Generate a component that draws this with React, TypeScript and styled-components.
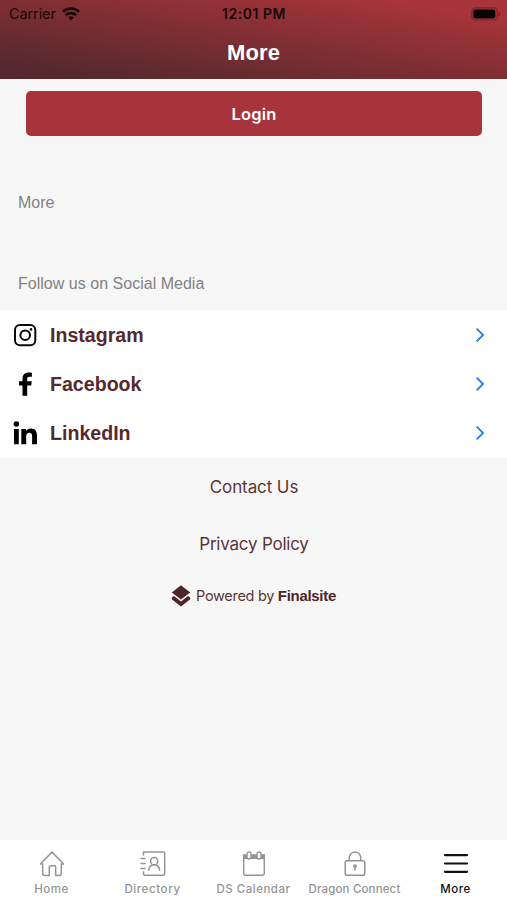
import React from "react";
import styled, { createGlobalStyle } from "styled-components";

const GlobalStyle = createGlobalStyle`
  * { box-sizing: border-box; }
  body { margin: 0; background: #f7f7f7; font-family: Inter, "Liberation Sans", sans-serif; }
  svg { display: block; }
`;

const Screen = styled.div`
  width: 507px;
  height: 900px;
  display: flex;
  flex-direction: column;
  background: #f7f7f7;
  overflow: hidden;
`;

const Header = styled.header`
  height: 79px;
  flex: none;
  background: linear-gradient(to bottom left, #a7343a 12%, #55292d 90%);
`;

const StatusBar = styled.div`
  height: 28px;
  padding: 0 6px 0 9px;
  display: grid;
  grid-template-columns: 1fr auto 1fr;
  align-items: center;
  color: #1a0709;
  font-size: 14.5px;
  line-height: 28px;
`;

const Carrier = styled.div`
  display: flex;
  align-items: center;
  gap: 6px;
  letter-spacing: -0.1px;
  svg { margin-top: -1px; }
`;

const Clock = styled.div`
  margin-right: 2px;
  font-weight: 600;
  font-size: 14px;
  letter-spacing: 0.55px;
`;

const BatterySlot = styled.div`
  justify-self: end;
  margin-top: -1px;
`;

const Title = styled.h1`
  margin: 0;
  color: #fff;
  font: 700 22px/49px "Liberation Sans", sans-serif;
  letter-spacing: 0.1px;
  text-align: center;
`;

const LoginButton = styled.button`
  display: block;
  flex: none;
  width: 456px;
  height: 45px;
  margin: 12px 0 1px 26px;
  padding: 0;
  border: 0;
  border-radius: 5px;
  background: #a7343a;
  color: #fff;
  font: 600 16.5px/46px Inter, sans-serif;
  letter-spacing: 0.2px;
`;

const SectionHeading = styled.h2<{ $top: number }>`
  flex: none;
  margin: ${(p) => p.$top}px 0 0 18px;
  color: #828282;
  font: 400 16px/20px "Liberation Sans", sans-serif;
  letter-spacing: 0.02px;
`;

const SocialList = styled.div`
  flex: none;
  margin-top: 16px;
  height: 148px;
  background: #fff;
`;

const SocialRow = styled.div`
  height: 49px;
  padding: 0 20px 0 12px;
  display: grid;
  grid-template-columns: 38px 1fr auto;
  align-items: center;
  color: #55292d;
  font: 700 19.6px/51px "Liberation Sans", sans-serif;
  svg { margin-top: -1px; }
`;

const FooterLink = styled.div<{ $top: number; $spacing: number }>`
  flex: none;
  margin-top: ${(p) => p.$top}px;
  padding-left: 1px;
  color: #5b3438;
  font-size: 17px;
  line-height: 24px;
  letter-spacing: ${(p) => p.$spacing}px;
  text-align: center;
`;

const Powered = styled.div`
  flex: none;
  margin-top: 27.5px;
  display: flex;
  justify-content: center;
  align-items: center;
  gap: 5px;
  color: #5b3438;
  font-size: 14.5px;
  line-height: 24px;
  letter-spacing: -0.3px;
  strong { font: 700 15px/24px "Liberation Sans", sans-serif; letter-spacing: -0.3px; color: #4e262a; }
`;

const TabBar = styled.nav`
  flex: none;
  height: 60px;
  margin-top: auto;
  padding: 10px 1px 0;
  display: grid;
  grid-template-columns: repeat(5, 101px);
  background: #fff;
`;

const Tab = styled.div<{ $active?: boolean; $spacing?: number }>`
  display: flex;
  flex-direction: column;
  align-items: center;
  color: ${(p) => (p.$active ? "#111" : "#949494")};
  font-size: 11.5px;
  font-weight: 500;
  line-height: 18px;
  letter-spacing: ${(p) => p.$spacing ?? 0.3}px;
  white-space: nowrap;
  svg { margin-bottom: 1.5px; }
`;

const WifiIcon = () => (
  <svg width="18" height="14" viewBox="0 0 18 14" fill="none" stroke="currentColor" strokeWidth="2.7">
    <path d="M.9 4.8a11.6 11.6 0 0 1 16.2 0M3.8 8.2a7.5 7.5 0 0 1 10.4 0" />
    <path d="M6.3 10.5a4 4 0 0 1 5.4 0L9 13.4z" fill="currentColor" stroke="none" />
  </svg>
);

const BatteryIcon = () => (
  <svg width="30" height="14" viewBox="0 0 30 14">
    <rect x=".8" y=".8" width="25.6" height="12.2" rx="3.6" fill="none" stroke="#7a2328" strokeWidth="1.2" />
    <rect x="2.3" y="2.4" width="22" height="9" rx="2" fill="#080203" />
    <path d="M27.6 5v4q1.6-.5 1.6-2t-1.6-2z" fill="#7a2328" />
  </svg>
);

const InstagramIcon = () => (
  <svg width="26" height="26" viewBox="0 0 26 26" fill="none" stroke="#090909" strokeWidth="2">
    <rect x="3" y="3" width="20.3" height="20.3" rx="5" />
    <circle cx="13.2" cy="13.2" r="4.8" />
    <circle cx="19" cy="7.4" r="1.3" fill="#090909" stroke="none" />
  </svg>
);

const FacebookIcon = () => (
  <svg width="26" height="26" viewBox="0 0 26 26" fill="#000">
    <path d="M10.5 24.8V14.6H7v-4.3h3.5V7.6C10.5 3.6 13 1.5 16.7 1.5c1.4 0 2.7.1 3.2.2v4h-2.2c-2 0-2.5.8-2.5 2.3v2.3h4.6l-.6 4.3h-4v10.2z" />
  </svg>
);

const LinkedInIcon = () => (
  <svg width="26" height="26" viewBox="0 0 26 26" fill="#000">
    <circle cx="4.4" cy="4" r="2.8" />
    <path d="M2 9h4.8v15.2H2zM9.3 9H14v2c.9-1.5 2.5-2.5 4.7-2.5 4.7 0 6.3 2.8 6.3 7.2v8.5h-4.9v-7.6c0-2-.3-3.8-2.6-3.8-2.4 0-3.3 1.7-3.3 3.8v7.6H9.3z" />
  </svg>
);

const Chevron = () => (
  <svg width="12" height="16" viewBox="0 0 12 16" fill="none" stroke="#2384e8" strokeWidth="1.9">
    <path d="M1.7 1.7 8 8l-6.3 6.3" />
  </svg>
);

const LayersIcon = () => (
  <svg width="20" height="22" viewBox="0 0 20 22" fill="#4e262a">
    <path d="M10 .2 19.2 7.4 10 14.6.8 7.4z" />
    <path d="M.8 12.6 3 10.9l7 5.5 7-5.5 2.2 1.7v1.7L10 21.6.8 14.3z" />
  </svg>
);

const HomeIcon = () => (
  <svg width="26" height="28" viewBox="0 0 26 28" fill="none" stroke="currentColor" strokeWidth="1.5" strokeLinejoin="round" strokeLinecap="round">
    <path d="M3.7 14.1H1.5L13 2l11.5 12.1h-2.2v9.6q0 1.7-1.7 1.7h-3.9v-8.8q0-.9-.9-.9h-4.6q-.9 0-.9.9v8.8H5.4q-1.7 0-1.7-1.7z" />
  </svg>
);

const DirectoryIcon = () => (
  <svg width="26" height="28" viewBox="0 0 26 28" fill="none" stroke="currentColor" strokeWidth="1.5" strokeLinecap="round">
    <path d="M3.5 5V1.9h19.7q1.5 0 1.5 1.5v20.3q0 1.5-1.5 1.5H5q-1.5 0-1.5-1.5V22M1 8.4h4M1 13.5h4M1 18.5h4" />
    <circle cx="14.2" cy="11.2" r="3.6" />
    <path d="M8.8 20c.3-3.1 2.2-5.2 5.4-5.2S19.3 17 19.6 20" />
  </svg>
);

const CalendarIcon = () => (
  <svg width="26" height="28" viewBox="0 0 26 28" fill="none" stroke="currentColor" strokeWidth="1.5">
    <path d="M2.7 5h20.6v18.5q0 1.7-1.7 1.7H4.4q-1.7 0-1.7-1.7z" />
    <path d="M2.7 5h20.6v4H2.7z" fill="currentColor" stroke="none" />
    <g fill="#fff" strokeWidth="1.3">
      <rect x="6.1" y="2" width="3.9" height="7" rx="1.95" />
      <rect x="16.1" y="2" width="3.9" height="7" rx="1.95" />
    </g>
  </svg>
);

const LockIcon = () => (
  <svg width="26" height="28" viewBox="0 0 26 28" fill="none" stroke="currentColor" strokeWidth="1.5">
    <rect x="3.2" y="10.7" width="19.6" height="14.5" rx="1.8" />
    <path d="M7.2 10.7V7.8a5.8 5.8 0 0 1 11.6 0v2.9" />
    <circle cx="13" cy="16.1" r="1.9" fill="currentColor" stroke="none" />
    <path d="M13 16v4.4" />
  </svg>
);

const MenuIcon = () => (
  <svg width="26" height="28" viewBox="0 0 26 28" stroke="currentColor" strokeWidth="2.2" strokeLinecap="round">
    <path d="M2 5.2h22M2 13.5h22M2 21.8h22" />
  </svg>
);

const socials = [
  { name: "Instagram", Icon: InstagramIcon },
  { name: "Facebook", Icon: FacebookIcon },
  { name: "LinkedIn", Icon: LinkedInIcon },
];

const tabs = [
  { name: "Home", Icon: HomeIcon, spacing: 0.5 },
  { name: "Directory", Icon: DirectoryIcon, spacing: 0.6 },
  { name: "DS Calendar", Icon: CalendarIcon, spacing: 0.5 },
  { name: "Dragon Connect", Icon: LockIcon, spacing: 0.15 },
  { name: "More", Icon: MenuIcon, spacing: 0.5, active: true },
];

export default function App() {
  return (
    <Screen>
      <GlobalStyle />
      <Header>
        <StatusBar>
          <Carrier>Carrier <WifiIcon /></Carrier>
          <Clock>12:01 PM</Clock>
          <BatterySlot><BatteryIcon /></BatterySlot>
        </StatusBar>
        <Title>More</Title>
      </Header>
      <LoginButton>Login</LoginButton>
      <SectionHeading $top={56}>More</SectionHeading>
      <SectionHeading $top={61}>Follow us on Social Media</SectionHeading>
      <SocialList>
        {socials.map(({ name, Icon }) => (
          <SocialRow key={name}>
            <Icon />
            <span>{name}</span>
            <Chevron />
          </SocialRow>
        ))}
      </SocialList>
      <FooterLink $top={17} $spacing={-0.1}>Contact Us</FooterLink>
      <FooterLink $top={33} $spacing={-0.22}>Privacy Policy</FooterLink>
      <Powered>
        <LayersIcon />
        <span>Powered by <strong>Finalsite</strong></span>
      </Powered>
      <TabBar>
        {tabs.map(({ name, Icon, spacing, active }) => (
          <Tab key={name} $spacing={spacing} $active={active}>
            <Icon />
            {name}
          </Tab>
        ))}
      </TabBar>
    </Screen>
  );
}
